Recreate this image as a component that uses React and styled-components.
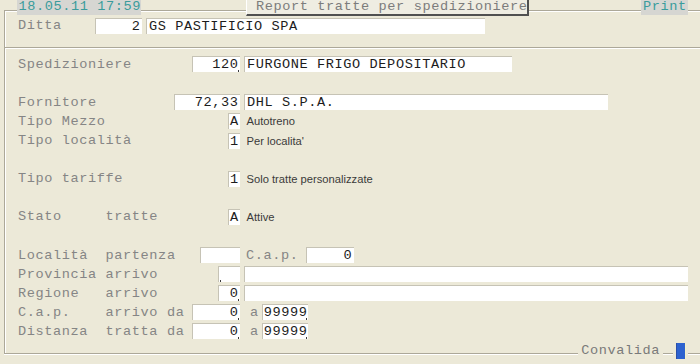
import React from "react";
import styled, { createGlobalStyle, css } from "styled-components";

const GlobalStyle = createGlobalStyle`
  html, body { margin: 0; padding: 0; background: #ece9d8; }
  #root { width: 700px; height: 364px; }
`;

const ETCH = "#aca899";
const ROW = "19.1px";

const Screen = styled.div`
  width: 700px;
  height: 364px;
  overflow: hidden;
  box-sizing: border-box;
  padding-left: 4px;
  background: #ece9d8;
  font-family: "Liberation Mono", "Courier New", monospace;
  font-size: 13.6px;
  letter-spacing: 0.6px;
  color: #858585;
  display: flex;
  flex-direction: column;
`;

const Header = styled.div`
  flex: none;
  height: 16.45px;
  display: flex;
  align-items: flex-start;
`;

const TopLine = styled.div`
  flex: ${(p) => (p.$w ? "none" : 1)};
  width: ${(p) => (p.$w ? `${p.$w}px` : "auto")};
  box-sizing: border-box;
  align-self: stretch;
  margin-top: 10px;
  border-top: 1px solid ${ETCH};
  box-shadow: inset 0 1px 0 #fff;
  ${(p) =>
    p.$corner &&
    css`
      border-left: 1px solid ${ETCH};
      box-shadow: inset 0 1px 0 #fff, inset 1px 0 0 #fff;
    `}
`;

const Stamp = styled.div`
  flex: none;
  width: ${(p) => p.$w}px;
  height: 14.5px;
  box-sizing: border-box;
  padding-left: ${(p) => p.$pad ?? 1.5}px;
  background: #d6d6d2;
  color: #3a9c9c;
  line-height: 14.5px;
  white-space: pre;
`;

const TitleButton = styled.div`
  flex: none;
  width: 283px;
  height: 16px;
  box-sizing: border-box;
  padding-left: 9px;
  background: #efede2;
  border-left: 1px solid #fff;
  border-right: 2px solid #505050;
  border-bottom: 2px solid #505050;
  color: #7c7c7c;
  line-height: 14px;
  white-space: pre;
`;

const Frame = styled.div`
  flex: none;
  display: flex;
  flex-direction: column;
  border-left: 1px solid ${ETCH};
  box-shadow: inset 1px 0 0 #fff;
`;

const Row = styled.div`
  height: ${ROW};
  display: flex;
  align-items: center;
  padding-left: 13px;
`;

const Separator = styled.div`
  height: ${ROW};
  display: flex;
  align-items: flex-start;
  &::before {
    content: "";
    flex: 1;
    margin-top: 11px;
    border-top: 1px solid ${ETCH};
    border-bottom: 1px solid #fff;
  }
`;

const Lead = styled.div`
  flex: none;
  width: ${(p) => p.$w ?? 222}px;
  display: flex;
  align-items: center;
  justify-content: space-between;
`;

const Label = styled.span`
  white-space: pre;
  color: #858585;
`;

const Field = styled.div`
  position: relative;
  flex: none;
  box-sizing: border-box;
  width: ${(p) => p.$w}px;
  height: 16px;
  margin-left: ${(p) => p.$ml ?? 0}px;
  padding: 0 ${(p) => p.$pad ?? 2}px;
  background: #fff;
  border-top: 1px solid #c6c3b5;
  border-left: 1px solid #c6c3b5;
  color: #1c1c1c;
  line-height: 15px;
  white-space: pre;
  overflow: hidden;
  text-align: ${(p) => p.$align ?? "left"};
  ${(p) =>
    p.$align === "right" &&
    css`
      padding-right: ${(p.$pad ?? 2) - 0.6}px;
    `}
  ${(p) =>
    p.$dot &&
    css`
      &::after {
        content: "";
        position: absolute;
        bottom: 0;
        ${p.$dot === "left" ? "left: 1px;" : "right: 1px;"}
        width: 1px;
        height: 2px;
        background: #3a3a3a;
      }
    `}
`;

const Caption = styled.span`
  white-space: pre;
  color: #858585;
  margin-left: ${(p) => p.$ml}px;
  margin-right: ${(p) => p.$mr}px;
`;

const Hint = styled.span`
  margin-left: 6.5px;
  font-family: "Liberation Sans", Arial, sans-serif;
  font-size: 11.2px;
  letter-spacing: 0;
  color: #3a3a3a;
  white-space: pre;
`;

const Footer = styled.div`
  flex: none;
  height: ${ROW};
  display: flex;
  align-items: flex-start;
`;

const BottomLine = styled.div`
  flex: ${(p) => (p.$w ? "none" : 1)};
  width: ${(p) => (p.$w ? `${p.$w}px` : "auto")};
  height: 12.85px;
  box-sizing: border-box;
  border-bottom: 1px solid ${ETCH};
  box-shadow: 0 1px 0 #fff;
  ${(p) =>
    p.$corner &&
    css`
      border-left: 1px solid ${ETCH};
      box-shadow: 0 1px 0 #fff, inset 1px 0 0 #fff;
    `}
`;

const FootText = styled.span`
  flex: none;
  margin: 0 3px;
  line-height: ${ROW};
  color: #7a7a7a;
`;

const Confirm = styled.div`
  flex: none;
  width: 10px;
  height: 16px;
  margin: 1.85px 2px 0 3px;
  box-sizing: border-box;
  background: #2d62cf;
  border-left: 1px solid #2a4fa8;
  border-right: 1px solid #f4f2c8;
`;

const Blank = styled.div`
  height: ${(p) => `calc(${ROW} * ${p.$n ?? 1})`};
`;

const codeRows = [
  { label: "Tipo Mezzo", code: "A", hint: "Autotreno" },
  { label: "Tipo località", code: "1", hint: "Per localita'" },
];

export default function App() {
  return (
    <>
      <GlobalStyle />
      <Screen>
        <Header>
          <TopLine $corner $w={13} />
          <Stamp $w={124}>18.05.11 17:59</Stamp>
          <TopLine $w={105} />
          <TitleButton>Report tratte per spedizioniere</TitleButton>
          <TopLine $w={112} />
          <Stamp $w={47} $pad={2}>Print</Stamp>
          <TopLine />
        </Header>

        <Frame>
          <Row>
            <Lead $w={124}>
              <Label>Ditta</Label>
              <Field $w={47} $align="right">2</Field>
            </Lead>
            <Field $w={339} $ml={4}>GS PASTIFICIO SPA</Field>
          </Row>
          <Separator />
          <Row>
            <Lead>
              <Label>Spedizioniere</Label>
              <Field $w={48} $align="right" $dot>120</Field>
            </Lead>
            <Field $w={268} $ml={4}>FURGONE FRIGO DEPOSITARIO</Field>
          </Row>
          <Blank />
          <Row>
            <Lead>
              <Label>Fornitore</Label>
              <Field $w={66} $align="right">72,33</Field>
            </Lead>
            <Field $w={364} $ml={4}>DHL S.P.A.</Field>
          </Row>
          {codeRows.map((r) => (
            <Row key={r.label}>
              <Lead>
                <Label>{r.label}</Label>
                <Field $w={12} $pad={1} $align="center">{r.code}</Field>
              </Lead>
              <Hint>{r.hint}</Hint>
            </Row>
          ))}
          <Blank />
          <Row>
            <Lead>
              <Label>Tipo tariffe</Label>
              <Field $w={12} $pad={1} $align="center">1</Field>
            </Lead>
            <Hint>Solo tratte personalizzate</Hint>
          </Row>
          <Blank />
          <Row>
            <Lead>
              <Label>{"Stato     tratte"}</Label>
              <Field $w={12} $pad={1} $align="center">A</Field>
            </Lead>
            <Hint>Attive</Hint>
          </Row>
          <Blank />
          <Row>
            <Lead>
              <Label>{"Località  partenza"}</Label>
              <Field $w={40} />
            </Lead>
            <Caption $ml={6} $mr={7}>C.a.p.</Caption>
            <Field $w={48} $align="right">0</Field>
          </Row>
          <Row>
            <Lead>
              <Label>{"Provincia arrivo"}</Label>
              <Field $w={22} $dot="left" />
            </Lead>
            <Field $w={444} $ml={4} />
          </Row>
          <Row>
            <Lead>
              <Label>{"Regione   arrivo"}</Label>
              <Field $w={22} $align="right" $dot>0</Field>
            </Lead>
            <Field $w={444} $ml={4} />
          </Row>
          <Row>
            <Lead>
              <Label>{"C.a.p.    arrivo da"}</Label>
              <Field $w={48} $align="right" $dot>0</Field>
            </Lead>
            <Caption $ml={10} $mr={3}>a</Caption>
            <Field $w={46} $pad={1} $dot>99999</Field>
          </Row>
          <Row>
            <Lead>
              <Label>{"Distanza  tratta da"}</Label>
              <Field $w={48} $align="right" $dot>0</Field>
            </Lead>
            <Caption $ml={10} $mr={3}>a</Caption>
            <Field $w={46} $pad={1} $dot>99999</Field>
          </Row>
        </Frame>

        <Footer>
          <BottomLine $corner />
          <FootText>Convalida</FootText>
          <BottomLine $w={10} />
          <Confirm />
          <BottomLine $w={12} />
        </Footer>
      </Screen>
    </>
  );
}
